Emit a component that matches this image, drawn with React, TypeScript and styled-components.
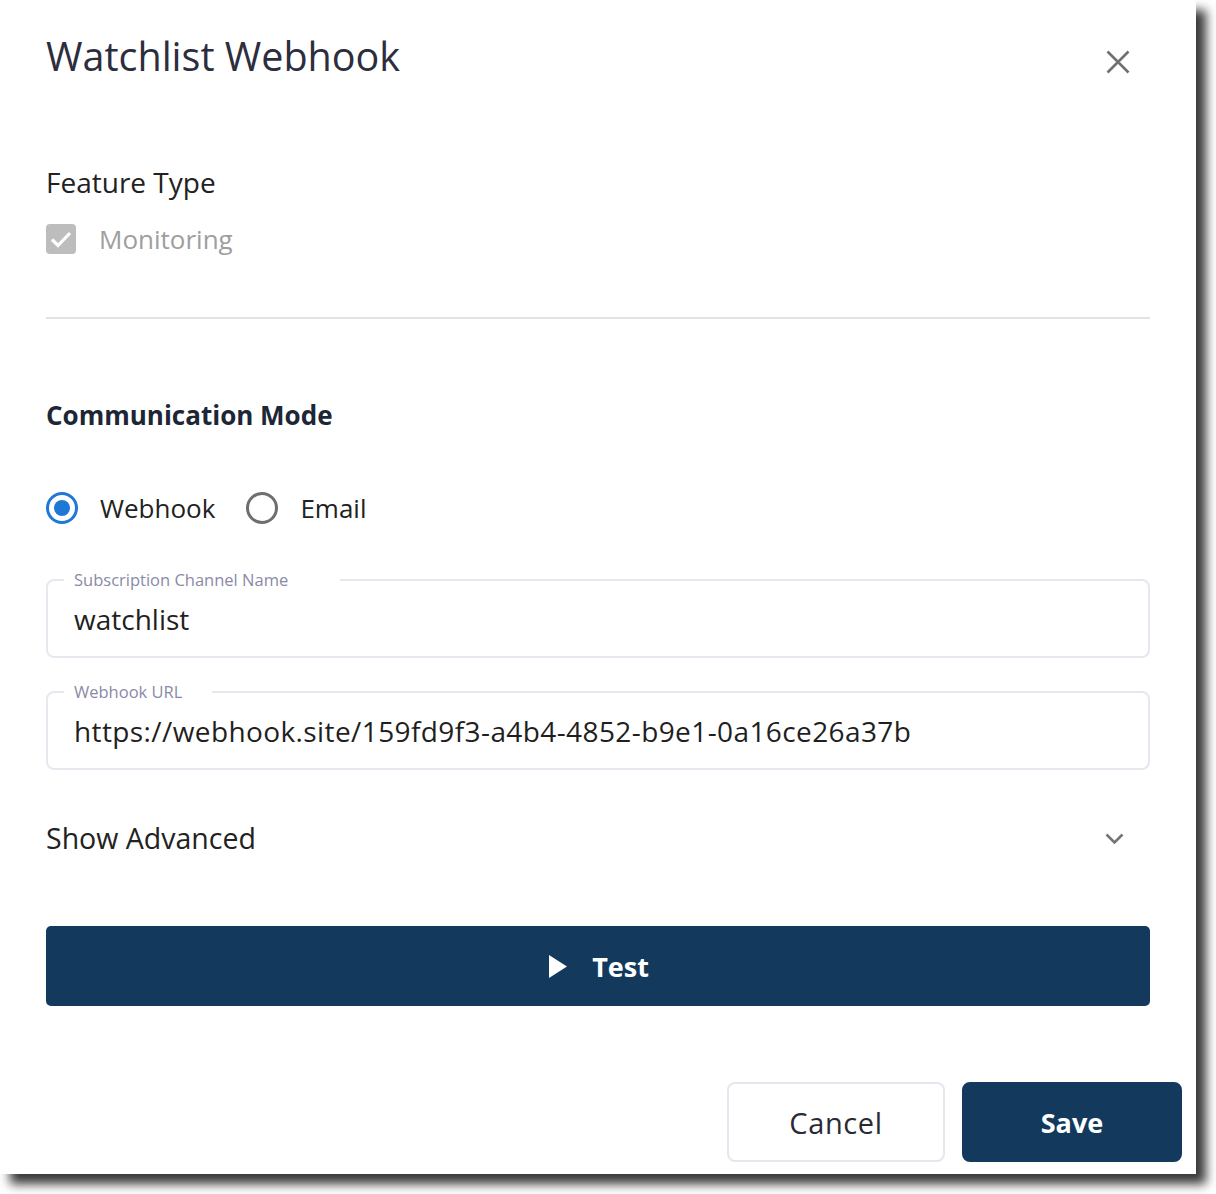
import React from "react";
import styled, { createGlobalStyle } from "styled-components";

const GlobalStyle = createGlobalStyle`
  html, body {
    margin: 0;
    padding: 0;
    background: #ffffff;
  }
  body {
    font-family: "Open Sans", "Noto Sans", sans-serif;
    color: #222222;
  }
`;

const navy = "#133a5d";

const Page = styled.div`
  padding-bottom: 20px;
`;

const Dialog = styled.div`
  width: 1196px;
  height: 1174px;
  box-sizing: border-box;
  padding: 0 46px;
  background: #ffffff;
  box-shadow: 10px 10px 10px rgba(0, 0, 0, 0.78);
  display: flex;
  flex-direction: column;
`;

const Header = styled.div`
  display: flex;
  justify-content: space-between;
  align-items: flex-start;
  padding-top: 32px;
`;

const Title = styled.h1`
  margin: 0;
  font-size: 39.5px;
  line-height: 48px;
  font-weight: 500;
  color: #2c2e3d;
`;

const CloseButton = styled.button`
  width: 40px;
  height: 40px;
  margin: 10px 12px 0 0;
  padding: 0;
  border: none;
  background: transparent;
  display: flex;
  align-items: center;
  justify-content: center;
  color: #707070;
  cursor: pointer;
`;

const FieldTitle = styled.div`
  margin-top: 82px;
  font-size: 28px;
  line-height: 36px;
  color: #222222;
`;

const CheckRow = styled.label`
  margin-top: 21px;
  height: 36px;
  display: flex;
  align-items: center;
  gap: 23px;
  font-size: 26px;
  color: #9e9e9e;
`;

const CheckBox = styled.span`
  width: 30px;
  height: 30px;
  border-radius: 4px;
  background: #bdbdbd;
  display: flex;
  align-items: center;
  justify-content: center;
`;

const Divider = styled.hr`
  margin: 60px 0 0;
  border: none;
  height: 2px;
  background: #e3e3e3;
`;

const SectionTitle = styled.h2`
  margin: 80px 0 0;
  font-size: 26px;
  line-height: 32px;
  font-weight: 700;
  color: #1d2636;
`;

const RadioRow = styled.div`
  margin-top: 57px;
  height: 40px;
  display: flex;
  align-items: center;
  gap: 31px;
`;

const RadioOption = styled.label`
  display: flex;
  align-items: center;
  gap: 22px;
  font-size: 26px;
  color: #222222;
  cursor: pointer;
`;

const RadioCircle = styled.span<{ $checked?: boolean }>`
  width: 32px;
  height: 32px;
  box-sizing: border-box;
  border-radius: 50%;
  border: 3px solid ${(p) => (p.$checked ? "#1f78d6" : "#6e6e6e")};
  display: flex;
  align-items: center;
  justify-content: center;
  &::after {
    content: "";
    width: 16px;
    height: 16px;
    border-radius: 50%;
    background: ${(p) => (p.$checked ? "#1f78d6" : "transparent")};
  }
`;

const Field = styled.div<{ $gap: number }>`
  position: relative;
  margin-top: ${(p) => p.$gap}px;
  height: 79px;
  box-sizing: border-box;
  border: 2px solid #e7e7f0;
  border-radius: 8px;
  display: flex;
  align-items: center;
  padding: 0 26px;
`;

const FieldLabel = styled.span<{ $notch: number }>`
  position: absolute;
  top: -10px;
  left: 16px;
  padding: 0 ${(p) => p.$notch}px 0 10px;
  background: #ffffff;
  font-size: 16.5px;
  line-height: 18px;
  color: #8a8aa6;
`;

const FieldInput = styled.input<{ $tracking?: number }>`
  width: 100%;
  border: none;
  outline: none;
  background: transparent;
  padding: 0;
  margin-top: 1px;
  font-family: "Open Sans", "Noto Sans", sans-serif;
  font-size: 28px;
  line-height: 40px;
  letter-spacing: ${(p) => p.$tracking ?? 0}px;
  color: #1f1f1f;
`;

const AdvancedRow = styled.div`
  margin-top: 48px;
  height: 40px;
  display: flex;
  align-items: center;
  justify-content: space-between;
  font-size: 28.5px;
  color: #222222;
  padding-right: 26px;
  cursor: pointer;
`;

const TestButton = styled.button`
  margin-top: 68px;
  height: 80px;
  border: none;
  border-radius: 5px;
  background: ${navy};
  color: #ffffff;
  display: flex;
  align-items: center;
  justify-content: center;
  gap: 25px;
  padding-left: 8px;
  font-family: "Open Sans", "Noto Sans", sans-serif;
  font-size: 27px;
  font-weight: 700;
  cursor: pointer;
`;

const Footer = styled.div`
  margin: 76px -32px 0 0;
  display: flex;
  justify-content: flex-end;
  gap: 17px;
`;

const FooterButton = styled.button<{ $primary?: boolean }>`
  width: ${(p) => (p.$primary ? 220 : 218)}px;
  height: 80px;
  box-sizing: border-box;
  border-radius: 8px;
  border: 2px solid ${(p) => (p.$primary ? navy : "#e6e6ef")};
  background: ${(p) => (p.$primary ? navy : "#ffffff")};
  color: ${(p) => (p.$primary ? "#ffffff" : "#2a2a35")};
  font-family: "Open Sans", "Noto Sans", sans-serif;
  font-size: ${(p) => (p.$primary ? 27 : 29)}px;
  letter-spacing: ${(p) => (p.$primary ? 0 : 0.6)}px;
  font-weight: ${(p) => (p.$primary ? 700 : 400)};
  cursor: pointer;
`;

export default function App() {
  return (
    <Page>
      <GlobalStyle />
      <Dialog>
        <Header>
          <Title>Watchlist Webhook</Title>
          <CloseButton aria-label="Close">
            <svg width="24" height="24" viewBox="0 0 24 24">
              <path
                d="M1.5 1.5 L22.5 22.5 M22.5 1.5 L1.5 22.5"
                stroke="currentColor"
                strokeWidth="2.6"
                fill="none"
              />
            </svg>
          </CloseButton>
        </Header>

        <FieldTitle>Feature Type</FieldTitle>
        <CheckRow>
          <CheckBox>
            <svg width="30" height="30" viewBox="0 0 30 30">
              <path
                d="M6 15.5 L12 21.5 L24 9"
                stroke="#ffffff"
                strokeWidth="3.2"
                fill="none"
              />
            </svg>
          </CheckBox>
          Monitoring
        </CheckRow>

        <Divider />

        <SectionTitle>Communication Mode</SectionTitle>
        <RadioRow>
          <RadioOption>
            <RadioCircle $checked />
            Webhook
          </RadioOption>
          <RadioOption>
            <RadioCircle />
            Email
          </RadioOption>
        </RadioRow>

        <Field $gap={51}>
          <FieldLabel $notch={52}>Subscription Channel Name</FieldLabel>
          <FieldInput readOnly value="watchlist" />
        </Field>
        <Field $gap={33}>
          <FieldLabel $notch={30}>Webhook URL</FieldLabel>
          <FieldInput
            readOnly
            $tracking={0.4}
            value="https://webhook.site/159fd9f3-a4b4-4852-b9e1-0a16ce26a37b"
          />
        </Field>

        <AdvancedRow>
          Show Advanced
          <svg width="19" height="11" viewBox="0 0 19 11">
            <path
              d="M1.5 1.5 L9.5 9.5 L17.5 1.5"
              stroke="#757575"
              strokeWidth="2.6"
              fill="none"
            />
          </svg>
        </AdvancedRow>

        <TestButton>
          <svg width="18" height="23" viewBox="0 0 18 23">
            <polygon points="0,0 18,11.5 0,23" fill="#ffffff" />
          </svg>
          Test
        </TestButton>

        <Footer>
          <FooterButton>Cancel</FooterButton>
          <FooterButton $primary>Save</FooterButton>
        </Footer>
      </Dialog>
    </Page>
  );
}
